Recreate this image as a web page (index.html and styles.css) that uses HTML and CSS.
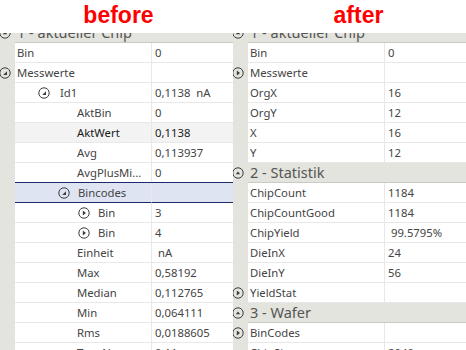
FILE: index.html
```html
<!DOCTYPE html>
<html lang="de">
<head>
  <meta charset="UTF-8" />
  <title>PropertyGrid vorher / nachher</title>
  <link rel="stylesheet" href="styles.css">
</head>
<body>

<div class="titles">
  <div class="title before">before</div>
  <div class="title after">after</div>
</div>

<div class="panes">

  <!-- vorher -->
  <div class="pane">
    <div class="grid">
      <div class="sect">
        <div class="strip"><svg class="ico" viewBox="0 0 12 12"><circle cx="6" cy="6" r="5.2"/><path class="tri" d="M3.8 7.2 L8.2 7.2 L6 4.6 Z"/></svg></div>
        <div class="sect-name">1 - aktueller Chip</div>
      </div>
      <div class="row">
        <div class="strip"></div>
        <div class="name">Bin</div>
        <div class="val">0</div>
      </div>
      <div class="row">
        <div class="strip"><svg class="ico" viewBox="0 0 12 12"><circle cx="6" cy="6" r="5.2"/><path class="tri" d="M8 4.2 L8 8 L4.2 8 Z"/></svg></div>
        <div class="name">Messwerte</div>
        <div class="val"></div>
      </div>
      <div class="row">
        <div class="strip"></div>
        <div class="name lv1"><svg class="ico" viewBox="0 0 12 12"><circle cx="6" cy="6" r="5.2"/><path class="tri" d="M8 4.2 L8 8 L4.2 8 Z"/></svg>Id1</div>
        <div class="val">0,1138&nbsp; nA</div>
      </div>
      <div class="row">
        <div class="strip"></div>
        <div class="name lv2">AktBin</div>
        <div class="val">0</div>
      </div>
      <div class="row hot">
        <div class="strip"></div>
        <div class="name lv2">AktWert</div>
        <div class="val">0,1138</div>
      </div>
      <div class="row">
        <div class="strip"></div>
        <div class="name lv2">Avg</div>
        <div class="val">0,113937</div>
      </div>
      <div class="row">
        <div class="strip"></div>
        <div class="name lv2">AvgPlusMi...</div>
        <div class="val">0</div>
      </div>
      <div class="row sel">
        <div class="strip"></div>
        <div class="name lv1i"><svg class="ico" viewBox="0 0 12 12"><circle cx="6" cy="6" r="5.2"/><path class="tri" d="M8 4.2 L8 8 L4.2 8 Z"/></svg>Bincodes</div>
        <div class="val"></div>
      </div>
      <div class="row">
        <div class="strip"></div>
        <div class="name lv2i"><svg class="ico" viewBox="0 0 12 12"><circle cx="6" cy="6" r="5.2"/><path class="tri" d="M4.8 3.6 L8 6 L4.8 8.4 Z"/></svg>Bin</div>
        <div class="val">3</div>
      </div>
      <div class="row">
        <div class="strip"></div>
        <div class="name lv2i"><svg class="ico" viewBox="0 0 12 12"><circle cx="6" cy="6" r="5.2"/><path class="tri" d="M4.8 3.6 L8 6 L4.8 8.4 Z"/></svg>Bin</div>
        <div class="val">4</div>
      </div>
      <div class="row">
        <div class="strip"></div>
        <div class="name lv2">Einheit</div>
        <div class="val"> nA</div>
      </div>
      <div class="row">
        <div class="strip"></div>
        <div class="name lv2">Max</div>
        <div class="val">0,58192</div>
      </div>
      <div class="row">
        <div class="strip"></div>
        <div class="name lv2">Median</div>
        <div class="val">0,112765</div>
      </div>
      <div class="row">
        <div class="strip"></div>
        <div class="name lv2">Min</div>
        <div class="val">0,064111</div>
      </div>
      <div class="row">
        <div class="strip"></div>
        <div class="name lv2">Rms</div>
        <div class="val">0,0188605</div>
      </div>
      <div class="row">
        <div class="strip"></div>
        <div class="name lv2">TypeName</div>
        <div class="val">0,11</div>
      </div>
    </div>
  </div>

  <!-- nachher -->
  <div class="pane">
    <div class="grid">
      <div class="sect">
        <div class="strip"><svg class="ico" viewBox="0 0 12 12"><circle cx="6" cy="6" r="5.2"/><path class="tri" d="M3.8 7.2 L8.2 7.2 L6 4.6 Z"/></svg></div>
        <div class="sect-name">1 - aktueller Chip</div>
      </div>
      <div class="row">
        <div class="strip"></div>
        <div class="name">Bin</div>
        <div class="val">0</div>
      </div>
      <div class="row">
        <div class="strip"><svg class="ico" viewBox="0 0 12 12"><circle cx="6" cy="6" r="5.2"/><path class="tri" d="M4.8 3.6 L8 6 L4.8 8.4 Z"/></svg></div>
        <div class="name">Messwerte</div>
        <div class="val"></div>
      </div>
      <div class="row">
        <div class="strip"></div>
        <div class="name">OrgX</div>
        <div class="val">16</div>
      </div>
      <div class="row">
        <div class="strip"></div>
        <div class="name">OrgY</div>
        <div class="val">12</div>
      </div>
      <div class="row">
        <div class="strip"></div>
        <div class="name">X</div>
        <div class="val">16</div>
      </div>
      <div class="row">
        <div class="strip"></div>
        <div class="name">Y</div>
        <div class="val">12</div>
      </div>
      <div class="sect">
        <div class="strip"><svg class="ico" viewBox="0 0 12 12"><circle cx="6" cy="6" r="5.2"/><path class="tri" d="M3.8 7.2 L8.2 7.2 L6 4.6 Z"/></svg></div>
        <div class="sect-name">2 - Statistik</div>
      </div>
      <div class="row">
        <div class="strip"></div>
        <div class="name">ChipCount</div>
        <div class="val">1184</div>
      </div>
      <div class="row">
        <div class="strip"></div>
        <div class="name">ChipCountGood</div>
        <div class="val">1184</div>
      </div>
      <div class="row">
        <div class="strip"></div>
        <div class="name">ChipYield</div>
        <div class="val"> 99.5795%</div>
      </div>
      <div class="row">
        <div class="strip"></div>
        <div class="name">DieInX</div>
        <div class="val">24</div>
      </div>
      <div class="row">
        <div class="strip"></div>
        <div class="name">DieInY</div>
        <div class="val">56</div>
      </div>
      <div class="row">
        <div class="strip"><svg class="ico" viewBox="0 0 12 12"><circle cx="6" cy="6" r="5.2"/><path class="tri" d="M4.8 3.6 L8 6 L4.8 8.4 Z"/></svg></div>
        <div class="name">YieldStat</div>
        <div class="val"></div>
      </div>
      <div class="sect">
        <div class="strip"><svg class="ico" viewBox="0 0 12 12"><circle cx="6" cy="6" r="5.2"/><path class="tri" d="M3.8 7.2 L8.2 7.2 L6 4.6 Z"/></svg></div>
        <div class="sect-name">3 - Wafer</div>
      </div>
      <div class="row">
        <div class="strip"><svg class="ico" viewBox="0 0 12 12"><circle cx="6" cy="6" r="5.2"/><path class="tri" d="M4.8 3.6 L8 6 L4.8 8.4 Z"/></svg></div>
        <div class="name">BinCodes</div>
        <div class="val"></div>
      </div>
      <div class="row">
        <div class="strip"></div>
        <div class="name">ChipSize</div>
        <div class="val">2040</div>
      </div>
    </div>
  </div>

</div>

</body>
</html>
```

FILE: styles.css
```css
body { margin: 0; background: #fff; font-family: "Noto Sans", "Open Sans", sans-serif; font-size: 11.3px; color: #444; }

.titles { display: flex; height: 33px; }
.title { width: 233px; box-sizing: border-box; text-align: center; font-family: "Liberation Sans", Arial, sans-serif; font-weight: bold; font-size: 23px; color: #f00; line-height: 31px; }
.before { padding-left: 4px; }
.after { padding-left: 18px; }

.panes { display: flex; }
.pane { width: 233px; height: 317px; overflow: hidden; }
.grid { margin-top: -10px; }

.row, .sect { display: flex; height: 20px; }
.strip { width: 15px; flex: none; background: #e3e4dd; display: flex; align-items: center; }
.name, .val { box-sizing: border-box; height: 20px; line-height: 19px; border-bottom: 1px solid #e8e8e8; white-space: pre; overflow: hidden; }
.name { width: 137px; flex: none; padding-left: 2px; border-right: 1px solid #e8e8e8; display: flex; align-items: center; }
.val { flex: 1; padding-left: 3px; }

.lv1 { padding-left: 23px; }
.lv2 { padding-left: 62px; }
.lv1i { padding-left: 43px; }
.lv2i { padding-left: 63px; }
.name .ico { margin-right: 8px; }
.lv1 .ico { margin-right: 10px; }

.ico { width: 12px; height: 12px; flex: none; }
.strip .ico { margin-left: -1px; }
.ico circle { fill: none; stroke: #3c3c3c; stroke-width: 1; }
.ico .tri { fill: #3c3c3c; }

.hot .name, .hot .val { background: #f3f3f3; color: #1a1a1a; }
.sel .name, .sel .val { background: #dee4f1; border-bottom-color: #1b2a6b; box-shadow: 0 -1px 0 #1b2a6b; }

.sect { background: #e3e4dd; box-shadow: 0 -1px 0 #cacac3; }
.sect .strip { border-bottom: 1px solid #e3e4dd; }
.sect-name { flex: 1; box-sizing: border-box; padding-left: 2px; border-bottom: 1px solid #cacac3; font-size: 14.5px; line-height: 19px; color: #555; }
```
